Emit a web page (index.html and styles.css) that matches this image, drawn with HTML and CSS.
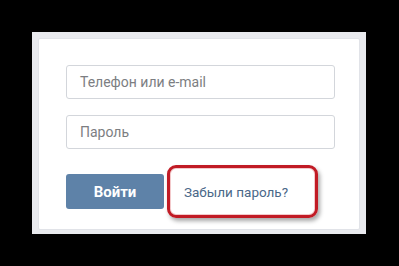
FILE: index.html
```html
<!DOCTYPE html>
<html>
<head>
<meta charset="utf-8">
<link rel="stylesheet" href="styles.css">
</head>
<body>
<div class="frame">
  <div class="card">
    <div class="field">Телефон или e-mail</div>
    <div class="field">Пароль</div>
    <div class="actions">
      <button class="btn">Войти</button>
      <div class="highlight"><a class="forgot">Забыли пароль?</a></div>
    </div>
  </div>
</div>
</body>
</html>
```
FILE: styles.css
```css
html, body {
  margin: 0;
  padding: 0;
  background: #000;
  height: 100%;
}
body {
  font-family: Roboto, "Noto Sans", "DejaVu Sans", sans-serif;
  padding: 32px 0 0 32px;
  box-sizing: border-box;
}
.frame {
  width: 334px;
  height: 202px;
  box-sizing: border-box;
  background: #e9eaee;
  padding: 6px 6px 4px 6px;
}
.card {
  height: 100%;
  box-sizing: border-box;
  background: #fff;
  border: 1px solid #e1e3e8;
  border-radius: 2px;
  padding: 26px 24px 0 27px;
}
.field {
  height: 34px;
  box-sizing: border-box;
  border: 1px solid #d3d6db;
  border-radius: 3px;
  padding: 0 13px;
  display: flex;
  align-items: center;
  font-size: 14px;
  color: #7c7e82;
  margin-bottom: 16px;
}
.actions {
  display: flex;
  align-items: center;
  margin-top: 5px;
}
.btn {
  width: 98px;
  height: 35px;
  border: 0;
  border-radius: 3px;
  background: #5e82a8;
  color: #fff;
  font-family: inherit;
  font-weight: bold;
  font-size: 15px;
  padding: 0;
}
.highlight {
  margin-left: 3px;
  width: 151px;
  height: 53px;
  box-sizing: border-box;
  border: 3px solid #c11b25;
  border-radius: 9px;
  box-shadow: 2px 3px 4px rgba(0,0,0,0.35), inset 0 0 0 1px #f3c9cb;
  display: flex;
  align-items: center;
  padding-left: 14px;
}
.forgot {
  font-size: 13.5px;
  color: #4a6888;
}
```
